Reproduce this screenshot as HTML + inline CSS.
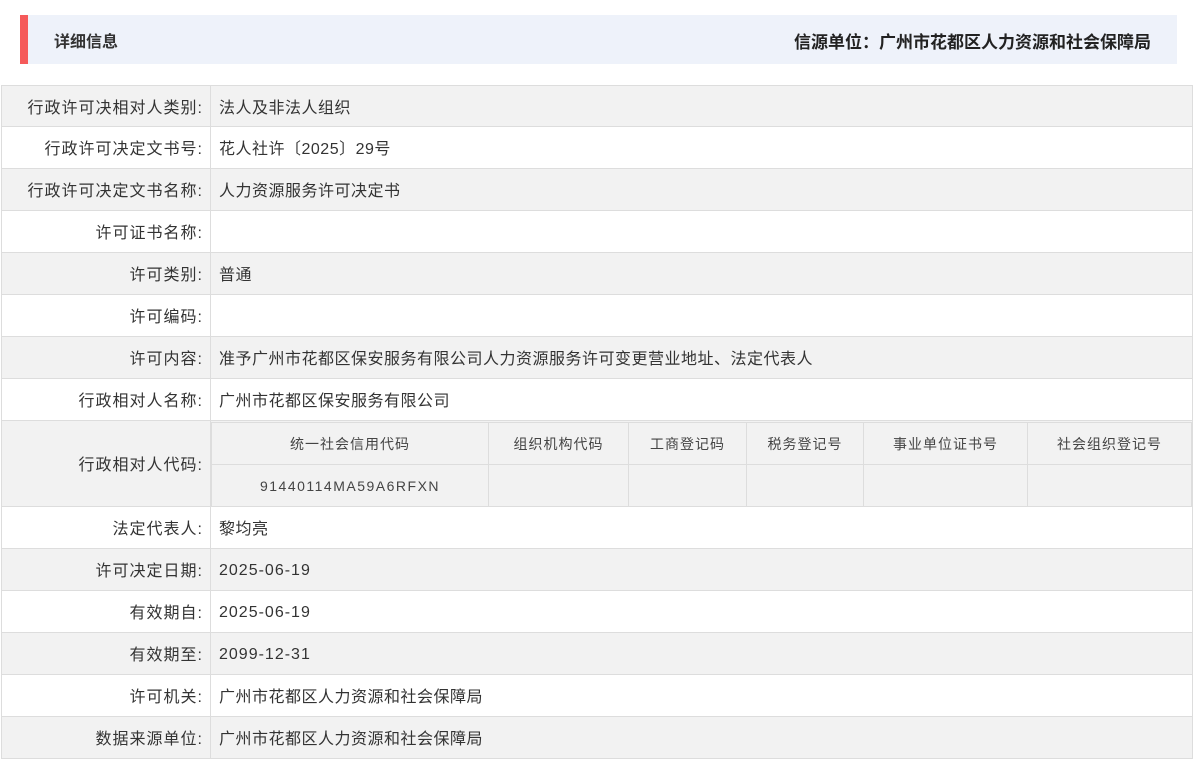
<!DOCTYPE html>
<html><head><meta charset="utf-8"><style>
*{margin:0;padding:0;box-sizing:border-box}
body{width:1197px;height:758px;overflow:hidden;background:#fff;font-family:"Liberation Sans","Noto Sans CJK SC",sans-serif;font-size:16px;color:#333;position:relative}
.hd{position:absolute;left:20px;top:15px;width:1157px;height:49px;background:#eef2fa;border-left:8px solid #f55a5a}
.hd .l{position:absolute;left:26px;top:13px;font-size:16px;font-weight:bold;color:#333}
.hd .r{position:absolute;right:26px;top:13px;font-size:17px;font-weight:bold;color:#222}
.row{position:absolute;left:1px;width:1192px;border:1px solid #ddd;border-top:none;background:#fff}
.row.g{background:#f2f2f2}
.lab{position:absolute;left:0;top:0;width:209px;height:100%;border-right:1px solid #ddd;text-align:right;padding-right:7px;padding-bottom:1px;display:flex;align-items:center;justify-content:flex-end;letter-spacing:1px}
.val{position:absolute;left:217px;top:0;height:100%;padding-bottom:1px;display:flex;align-items:center;letter-spacing:0.5px}
.num{letter-spacing:1px;padding-top:3px;padding-bottom:0}
table{position:absolute;left:209px;top:1px;width:981px;border-collapse:collapse;font-size:14px;background:#f2f2f2;table-layout:fixed}
td{border:1px solid #ddd;height:42px;text-align:center;color:#444;letter-spacing:1px}
</style></head><body>
<div class="hd"><span class="l">详细信息</span><span class="r">信源单位：广州市花都区人力资源和社会保障局</span></div>
<div class="row g" style="top:85px;height:42px;border-top:1px solid #ddd"><div class="lab">行政许可决相对人类别:</div><div class="val">法人及非法人组织</div></div>
<div class="row" style="top:127px;height:42px"><div class="lab">行政许可决定文书号:</div><div class="val">花人社许〔2025〕29号</div></div>
<div class="row g" style="top:169px;height:42px"><div class="lab">行政许可决定文书名称:</div><div class="val">人力资源服务许可决定书</div></div>
<div class="row" style="top:211px;height:42px"><div class="lab">许可证书名称:</div><div class="val"></div></div>
<div class="row g" style="top:253px;height:42px"><div class="lab">许可类别:</div><div class="val">普通</div></div>
<div class="row" style="top:295px;height:42px"><div class="lab">许可编码:</div><div class="val"></div></div>
<div class="row g" style="top:337px;height:42px"><div class="lab">许可内容:</div><div class="val">准予广州市花都区保安服务有限公司人力资源服务许可变更营业地址、法定代表人</div></div>
<div class="row" style="top:379px;height:42px"><div class="lab">行政相对人名称:</div><div class="val">广州市花都区保安服务有限公司</div></div>
<div class="row g" style="top:421px;height:86px"><div class="lab">行政相对人代码:</div>
<table><tr><td style="width:277px">统一社会信用代码</td><td style="width:140px">组织机构代码</td><td style="width:118px">工商登记码</td><td style="width:117px">税务登记号</td><td style="width:164px">事业单位证书号</td><td>社会组织登记号</td></tr>
<tr><td style="letter-spacing:1.5px">91440114MA59A6RFXN</td><td></td><td></td><td></td><td></td><td></td></tr></table></div>
<div class="row" style="top:507px;height:42px"><div class="lab">法定代表人:</div><div class="val">黎均亮</div></div>
<div class="row g" style="top:549px;height:42px"><div class="lab">许可决定日期:</div><div class="val num">2025-06-19</div></div>
<div class="row" style="top:591px;height:42px"><div class="lab">有效期自:</div><div class="val num">2025-06-19</div></div>
<div class="row g" style="top:633px;height:42px"><div class="lab">有效期至:</div><div class="val num">2099-12-31</div></div>
<div class="row" style="top:675px;height:42px"><div class="lab">许可机关:</div><div class="val">广州市花都区人力资源和社会保障局</div></div>
<div class="row g" style="top:717px;height:42px"><div class="lab">数据来源单位:</div><div class="val">广州市花都区人力资源和社会保障局</div></div>
</body></html>
